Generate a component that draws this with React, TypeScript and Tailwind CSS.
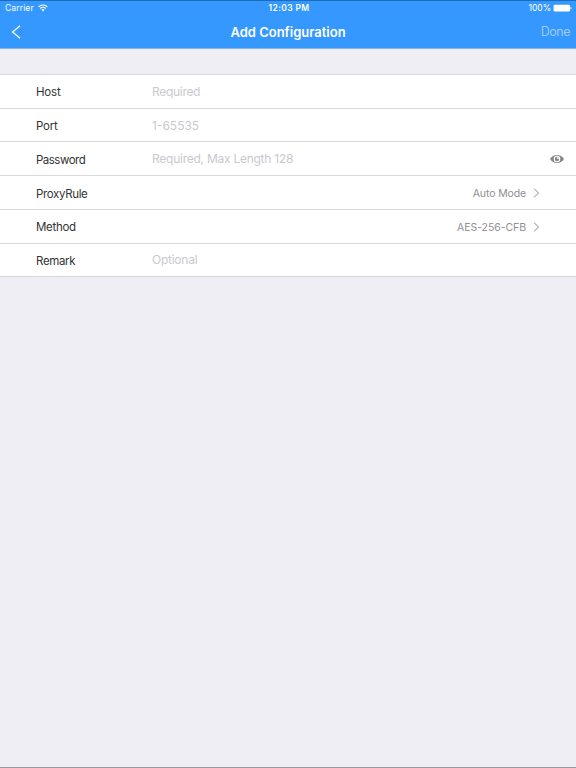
import React from "react";

type Row = {
  label: string;
  height: string;
  labelStyle: string;
  placeholder?: string;
  placeholderStyle?: string;
  value?: string;
  valueStyle?: string;
  secure?: boolean;
};

const rows: Row[] = [
  { label: "Host", height: "h-[34px]", labelStyle: "pt-[1px] tracking-[-0.2px]", placeholder: "Required", placeholderStyle: "tracking-[-0.3px]" },
  { label: "Port", height: "h-[33px]", labelStyle: "pt-[2px] tracking-[-0.25px]", placeholder: "1-65535", placeholderStyle: "pt-[1px]" },
  { label: "Password", height: "h-[34px]", labelStyle: "pt-[2px] tracking-[-0.5px]", placeholder: "Required, Max Length 128", placeholderStyle: "tracking-[-0.25px]", secure: true },
  { label: "ProxyRule", height: "h-[34px]", labelStyle: "pt-[2px] tracking-[-0.35px]", value: "Auto Mode", valueStyle: "tracking-[-0.12px]" },
  { label: "Method", height: "h-[34px]", labelStyle: "pt-[1px] tracking-[-0.3px]", value: "AES-256-CFB", valueStyle: "tracking-[-0.06px]" },
  { label: "Remark", height: "h-[33px]", labelStyle: "pt-[1px] tracking-[-0.35px]", placeholder: "Optional", placeholderStyle: "tracking-[-0.25px]" },
];

function Wifi() {
  return (
    <svg className="ml-[4px] h-[8px] w-[10px]" viewBox="0 0 10 8" fill="none" stroke="#fff" strokeWidth="1.15">
      <path d="M.6 2.8a6.2 6.2 0 0 1 8.8 0" />
      <path d="M2.2 4.5a4 4 0 0 1 5.6 0" />
      <path d="M3.4 5.7a2.3 2.3 0 0 1 3.2 0L5 7.4z" fill="#fff" stroke="none" />
    </svg>
  );
}

function Battery() {
  return (
    <svg className="ml-[2px] h-[8px] w-[19px]" viewBox="0 0 19 8" fill="#fff">
      <rect x="0.6" y="0.8" width="16.4" height="6.6" rx="1.2" />
      <path d="M17.5 2.8c1.4.2 1.4 2.4 0 2.6z" />
    </svg>
  );
}

function Eye() {
  return (
    <svg className="h-[10px] w-[14px]" viewBox="0 0 14 10">
      <path d="M0 5C1.7 2.3 4.1.9 7 .9S12.3 2.3 14 5C12.3 7.7 9.9 9.1 7 9.1S1.7 7.7 0 5z" fill="#858585" />
      <circle cx="7" cy="5" r="3.3" fill="#fff" />
      <circle cx="7" cy="5" r="2.2" fill="#858585" />
      <path d="M6.9 2.9v2.2h2.2A2.2 2.2 0 0 0 6.9 2.9z" fill="#e8e8e8" />
    </svg>
  );
}

function Disclosure() {
  return (
    <svg className="ml-[7px] h-[10px] w-[7px]" viewBox="0 0 7 10" fill="none" stroke="#b4b4b8" strokeWidth="1.1">
      <path d="M1 .6 5.6 5 1 9.4" />
    </svg>
  );
}

export default function App() {
  return (
    <div className="flex h-[768px] w-[576px] flex-col overflow-hidden border-b border-[#98989c] bg-[#efeef4] font-['Inter','Liberation_Sans',sans-serif]">
      <header className="flex h-[49px] shrink-0 flex-col border-t border-b border-t-[#1c6cb8] border-b-[#8ab2de] bg-[#3498ff] text-white">
        <div className="grid h-[14px] grid-cols-3 items-center text-[8.5px] leading-[14px]">
          <div className="flex items-center pl-[5px]">
            <span className="tracking-[0.12px]">Carrier</span>
            <Wifi />
          </div>
          <span className="pl-[2px] text-center font-semibold tracking-[0.35px]">12:03 PM</span>
          <div className="flex items-center justify-end pr-[4px]">
            <span>100%</span>
            <Battery />
          </div>
        </div>
        <div className="grid h-[33px] grid-cols-[100px_1fr_100px] items-center">
          <svg className="ml-[11px] h-[14px] w-[10px]" viewBox="0 0 10 14" fill="none" stroke="#fff" strokeWidth="1.3">
            <path d="M9 .7 1.6 7 9 13.3" />
          </svg>
          <h1 className="text-center text-[13px] font-semibold leading-[20px]">Add Configuration</h1>
          <span className="pt-[1px] pr-[6px] text-right text-[12.5px] leading-[20px] tracking-[-0.5px] text-[#a0c9f6]">Done</span>
        </div>
      </header>
      <main className="mt-[25px] border-t border-[#d9d9dc]">
        {rows.map((row) => (
          <div key={row.label} className={`flex items-center border-b border-[#d9d9dc] bg-white pl-[36px] ${row.height}`}>
            <span className={`w-[116px] text-[11.5px] leading-[18px] text-[#333] ${row.labelStyle}`}>{row.label}</span>
            {row.placeholder && (
              <span className={`flex-1 text-[12px] leading-[18px] text-[#c9c9ce] ${row.placeholderStyle}`}>{row.placeholder}</span>
            )}
            {row.secure && (
              <span className="pr-[12px]">
                <Eye />
              </span>
            )}
            {row.value && (
              <div className="flex flex-1 items-center justify-end pr-[36px]">
                <span className={`pt-[2px] text-[10.5px] leading-[18px] text-[#8f8f94] ${row.valueStyle}`}>{row.value}</span>
                <Disclosure />
              </div>
            )}
          </div>
        ))}
      </main>
    </div>
  );
}
